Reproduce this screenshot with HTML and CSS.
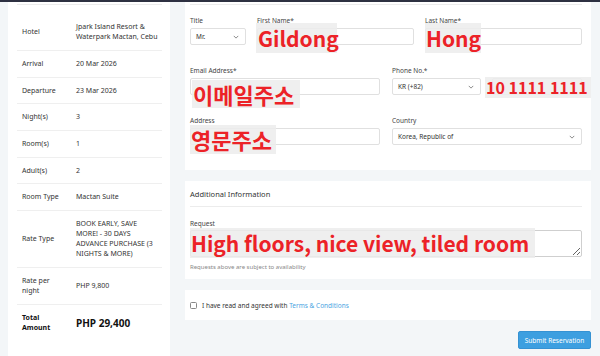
FILE: index.html
```html
<!DOCTYPE html>
<html lang="en">
<head>
    <meta charset="UTF-8">
    <meta name="viewport" content="width=device-width, initial-scale=1.0">
    <title>Reservation</title>
    <link rel="stylesheet" href="styles.css">
</head>
<body>
    <div class="topbar"></div>
    <div class="page">
        <div class="summary">
            <table class="summary-table">
                <colgroup><col class="col-label"><col></colgroup>
                <tr class="first"><td>Hotel</td><td class="hotel-value">Jpark Island Resort &amp; Waterpark Mactan, Cebu</td></tr>
                <tr><td>Arrival</td><td>20 Mar 2026</td></tr>
                <tr><td>Departure</td><td>23 Mar 2026</td></tr>
                <tr><td>Night(s)</td><td>3</td></tr>
                <tr><td>Room(s)</td><td>1</td></tr>
                <tr><td>Adult(s)</td><td>2</td></tr>
                <tr><td>Room Type</td><td>Mactan Suite</td></tr>
                <tr><td>Rate Type</td><td>BOOK EARLY, SAVE MORE! - 30 DAYS ADVANCE PURCHASE (3 NIGHTS &amp; MORE)</td></tr>
                <tr><td>Rate per night</td><td>PHP 9,800</td></tr>
                <tr class="total"><td>Total Amount</td><td class="total-value">PHP 29,400</td></tr>
            </table>
        </div>

        <div class="main">
            <div class="card guest">
                <div class="rule"></div>
                <div class="form-row row-names">
                    <div class="field">
                        <label>Title</label>
                        <div class="select">Mr.
                            <svg class="chev" viewBox="0 0 8 5" width="6" height="4"><path d="M1 1l3 3 3-3" fill="none" stroke="#666" stroke-width="1"/></svg>
                        </div>
                    </div>
                    <div class="field">
                        <label>First Name*</label>
                        <div class="input"></div>
                        <span class="note note-first">Gildong</span>
                    </div>
                    <div class="field">
                        <label>Last Name*</label>
                        <div class="input"></div>
                        <span class="note note-last">Hong</span>
                    </div>
                </div>
                <div class="form-row row-half">
                    <div class="field">
                        <label>Email Address*</label>
                        <div class="input"></div>
                        <span class="note note-email">이메일주소</span>
                    </div>
                    <div class="field">
                        <label>Phone No.*</label>
                        <div class="phone">
                            <div class="select">KR (+82)
                                <svg class="chev" viewBox="0 0 8 5" width="6" height="4"><path d="M1 1l3 3 3-3" fill="none" stroke="#666" stroke-width="1"/></svg>
                            </div>
                            <div class="input"></div>
                        </div>
                        <span class="note note-phone">10 1111 1111</span>
                    </div>
                </div>
                <div class="form-row row-half">
                    <div class="field">
                        <label>Address</label>
                        <div class="input"></div>
                        <span class="note note-address">영문주소</span>
                    </div>
                    <div class="field">
                        <label>Country</label>
                        <div class="select">Korea, Republic of
                            <svg class="chev" viewBox="0 0 8 5" width="6" height="4"><path d="M1 1l3 3 3-3" fill="none" stroke="#666" stroke-width="1"/></svg>
                        </div>
                    </div>
                </div>
            </div>

            <div class="card extra">
                <div class="card-title">Additional Information</div>
                <div class="field request">
                    <label>Request</label>
                    <textarea class="textarea" readonly></textarea>
                    <span class="note note-request">High floors, nice view, tiled room</span>
                </div>
                <div class="help">Requests above are subject to availability</div>
            </div>

            <div class="card terms">
                <span class="checkbox"></span>
                <span>I have read and agreed with <a href="#" class="link">Terms &amp; Conditions</a></span>
            </div>

            <div class="actions">
                <button class="submit">Submit Reservation</button>
            </div>
        </div>
    </div>
</body>
</html>
```

FILE: styles.css
```css
body {
    margin: 0;
    padding: 0;
    background-color: #f3f6f8;
    font-family: "Noto Sans", Arial, sans-serif;
    font-size: 7px;
    color: #333;
    height: 356px;
    overflow: hidden;
}
.topbar {
    height: 2px;
    background-color: #2e3142;
}
.page {
    display: flex;
    gap: 15px;
    padding-left: 8px;
}

/* booking summary */
.summary {
    width: 162px;
    box-sizing: border-box;
    background-color: #fff;
    padding: 2px 8px 16px 9px;
    height: 354px;
}
.summary-table {
    width: 100%;
    border-collapse: collapse;
    table-layout: fixed;
    border-top: 1px solid #ececec;
}
.col-label {
    width: 54px;
}
.summary-table td {
    padding: 8px 5px 7.7px;
    line-height: 10px;
    vertical-align: middle;
    color: #333;
}
.summary-table tr {
    border-bottom: 1px solid #efefef;
}
.summary-table tr.first td {
    padding-top: 17px;
    padding-bottom: 8px;
}
.summary-table tr.first td.hotel-value {
    padding-right: 0;
}
.summary-table tr.total {
    border-bottom: none;
}
.summary-table tr.total td {
    font-weight: bold;
    color: #111;
}
.summary-table td.total-value {
    font-size: 10px;
}

/* form column */
.main {
    width: 406px;
    display: flex;
    flex-direction: column;
    gap: 11px;
}
.card {
    background-color: #fff;
    box-sizing: border-box;
}
.guest {
    padding: 2px 9px 25px 5px;
}
.rule {
    border-top: 1px solid #ececec;
    margin-bottom: 11px;
}
.form-row {
    display: grid;
    gap: 11px;
    margin-bottom: 21px;
}
.form-row:last-child {
    margin-bottom: 0;
}
.row-names {
    grid-template-columns: 56px 1fr 1fr;
}
.row-half {
    grid-template-columns: 190px 1fr;
    column-gap: 12px;
}
.field {
    position: relative;
}
.field label {
    display: block;
    font-size: 6.5px;
    line-height: 10px;
    color: #444;
    margin-bottom: 2px;
}
.input,
.select {
    height: 17px;
    box-sizing: border-box;
    border: 1px solid #e0e0e0;
    border-radius: 2px;
    background-color: #fff;
}
.select {
    display: flex;
    align-items: center;
    justify-content: space-between;
    padding: 0 6px 0 5px;
    font-size: 6.5px;
    color: #333;
}
.phone {
    display: grid;
    grid-template-columns: 89px 1fr;
    gap: 11px;
}

/* red annotations over the inputs */
.note {
    position: absolute;
    background-color: rgba(236, 236, 236, 0.85);
    color: #ec2227;
    font-family: "Noto Sans CJK KR", "Noto Sans", sans-serif;
    font-weight: 700;
    font-size: 21px;
    line-height: 30px;
    height: 30px;
    padding-left: 2px;
    box-sizing: border-box;
    white-space: nowrap;
}
.note-first {
    left: -1px;
    top: 7px;
    width: 81px;
}
.note-last {
    left: 0;
    top: 7px;
    width: 56px;
    padding-left: 1px;
}
.note-email {
    left: 2px;
    top: 14px;
    width: 108px;
    height: 28px;
    line-height: 28px;
    font-size: 22px;
    padding-left: 1px;
}
.note-phone {
    left: 93px;
    top: 11px;
    width: 106px;
    height: 21px;
    line-height: 21px;
    font-size: 16px;
    padding-left: 1px;
}
.note-address {
    left: 0;
    top: 9px;
    width: 86px;
    height: 29px;
    line-height: 29px;
    font-size: 22px;
    padding-left: 1px;
}
.note-request {
    left: 0;
    top: 9px;
    width: 345px;
    padding-left: 1px;
}

/* additional information */
.extra {
    padding: 8px 9px 7px 5px;
}
.card-title {
    font-size: 7.5px;
    line-height: 10px;
    color: #333;
    padding-bottom: 7px;
    border-bottom: 1px solid #ececec;
    margin-bottom: 12px;
}
.request label {
    margin-bottom: 1px;
}
.textarea {
    display: block;
    width: 100%;
    height: 27px;
    box-sizing: border-box;
    border: 1px solid #cfcfcf;
    border-radius: 2px;
    margin: 0;
    padding: 0;
    font-family: inherit;
}
.help {
    margin-top: 5px;
    font-size: 6px;
    line-height: 10px;
    color: #888;
}

/* terms */
.terms {
    display: flex;
    align-items: center;
    gap: 5px;
    height: 30px;
    padding: 0 5px;
    font-size: 6.5px;
    color: #333;
}
.checkbox {
    width: 7px;
    height: 7px;
    box-sizing: border-box;
    border: 1px solid #888;
    border-radius: 1.5px;
}
.link {
    color: #4aa3df;
    text-decoration: none;
}

.actions {
    display: flex;
    justify-content: flex-end;
}
.submit {
    width: 73px;
    height: 18px;
    padding: 0;
    background-color: #3d9fe0;
    border: 1px solid #3592d3;
    border-radius: 2px;
    color: #fff;
    font-family: "Noto Sans", Arial, sans-serif;
    font-size: 6.5px;
}
```
